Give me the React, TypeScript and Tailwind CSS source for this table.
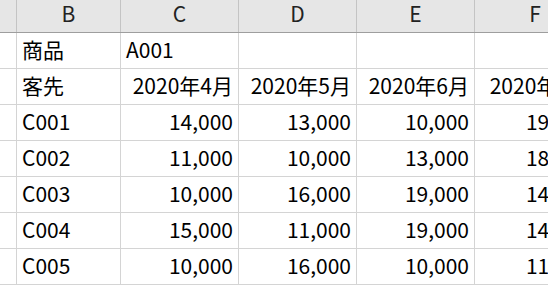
const font = {
    fontFamily: '"Noto Sans CJK JP", "Noto Sans", sans-serif',
}

const columns = ['', 'B', 'C', 'D', 'E', 'F']
const widths = ['w-[17px]', 'w-[104px]', 'w-[118px]', 'w-[118px]', 'w-[118px]', 'w-[121px]']

type Cell = { text: string; align?: 'left' | 'right' }

const rows: Cell[][] = [
    [{ text: '' }, { text: '商品' }, { text: 'A001' }, { text: '' }, { text: '' }, { text: '' }],
    [
        { text: '' },
        { text: '客先' },
        { text: '2020年4月', align: 'right' },
        { text: '2020年5月', align: 'right' },
        { text: '2020年6月', align: 'right' },
        { text: '2020年7月', align: 'right' },
    ],
    ...[
        ['C001', '14,000', '13,000', '10,000', '19,000'],
        ['C002', '11,000', '10,000', '13,000', '18,000'],
        ['C003', '10,000', '16,000', '19,000', '14,000'],
        ['C004', '15,000', '11,000', '19,000', '14,000'],
        ['C005', '10,000', '16,000', '10,000', '11,000'],
    ].map(r => [
        { text: '' },
        { text: r[0] },
        ...r.slice(1).map(v => ({ text: v, align: 'right' as const })),
    ]),
]

export default function App() {
    return (
        <div
            className="w-[548px] h-[285px] overflow-hidden bg-white text-[21px] text-black"
            style={font}
        >
            <div className="flex w-max bg-[#e6e6e6] border-b border-[#9e9e9e]">
                {columns.map((c, i) => (
                    <div
                        key={i}
                        className={`${widths[i]} h-[32px] shrink-0 border-r border-[#c4c4c4] text-center leading-[27px] text-[#222]`}
                    >
                        {c}
                    </div>
                ))}
            </div>
            {rows.map((row, ri) => (
                <div key={ri} className="flex w-max">
                    {row.map((cell, ci) => (
                        <div
                            key={ci}
                            className={`${widths[ci]} h-[36px] shrink-0 overflow-hidden whitespace-nowrap border-r border-b border-[#d4d4d4] px-[5px] leading-[32px] ${
                                cell.align === 'right' ? 'text-right' : 'text-left'
                            }`}
                        >
                            {cell.text}
                        </div>
                    ))}
                </div>
            ))}
        </div>
    )
}
